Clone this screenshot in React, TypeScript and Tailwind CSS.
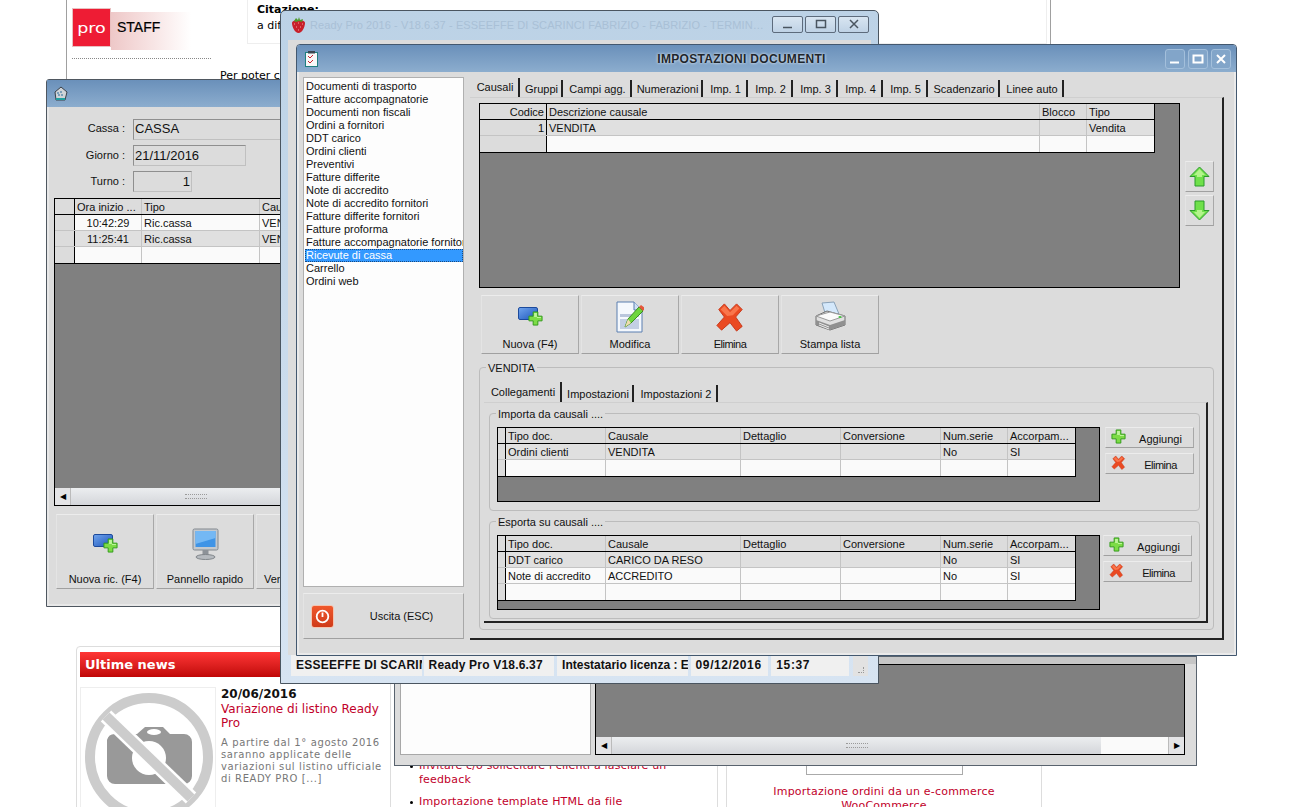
import type { ReactNode } from "react";

const LISTA = [
  "Documenti di trasporto",
  "Fatture accompagnatorie",
  "Documenti non fiscali",
  "Ordini a fornitori",
  "DDT carico",
  "Ordini clienti",
  "Preventivi",
  "Fatture differite",
  "Note di accredito",
  "Note di accredito fornitori",
  "Fatture differite fornitori",
  "Fatture proforma",
  "Fatture accompagnatorie fornitori",
  "Ricevute di cassa",
  "Carrello",
  "Ordini web",
];

const TABS = [
  { label: "Causali", w: "w-[50px]", active: true },
  { label: "Gruppi", w: "w-[43px]" },
  { label: "Campi agg.", w: "w-[69px]" },
  { label: "Numerazioni", w: "w-[71px]" },
  { label: "Imp. 1", w: "w-[45px]" },
  { label: "Imp. 2", w: "w-[45px]" },
  { label: "Imp. 3", w: "w-[45px]" },
  { label: "Imp. 4", w: "w-[45px]" },
  { label: "Imp. 5", w: "w-[45px]" },
  { label: "Scadenzario", w: "w-[72px]" },
  { label: "Linee auto", w: "w-[64px]" },
];

const SUBTABS = [
  { label: "Collegamenti", w: "w-[78px]", active: true },
  { label: "Impostazioni", w: "w-[72px]" },
  { label: "Impostazioni 2", w: "w-[84px]" },
];

const STATUS = [
  { t: "ESSEEFFE DI SCARINCI", c: "w-[131px] tracking-[0.25px]" },
  { t: "Ready Pro V18.6.37", c: "ml-[2px] w-[131px] tracking-[0.2px]" },
  { t: "Intestatario licenza : ESSEEFFE", c: "ml-[3px] w-[131px]" },
  { t: "09/12/2016", c: "ml-[3px] w-[78px] tracking-[0.6px]" },
  { t: "15:37", c: "ml-[3px] w-[78px] tracking-[0.6px]" },
];

const LINK_COLS = "grid-cols-[8px_100px_135px_100px_100px_67px_67px]";
const LINK_HEAD = ["", "Tipo doc.", "Causale", "Dettaglio", "Conversione", "Num.serie", "Accorpam..."];

/* ---------- icons ---------- */

function Plus({ size = 16 }: { size?: number }) {
  return (
    <svg width={size} height={size} viewBox="0 0 16 16">
      <path d="M5.5 1h5v4.5H15v5h-4.5V15h-5v-4.5H1v-5h4.5z" fill="#7ddc46" stroke="#2f9a18" strokeWidth="1" />
      <path d="M6.5 2.2h3v4.3h4.3v1H9.5v-1h-3z" fill="#bdf59a" />
    </svg>
  );
}

function RedX({ size = 16 }: { size?: number }) {
  return (
    <svg width={size} height={size} viewBox="0 0 32 32">
      <path
        d="M4 8 10 2l6 7 7-7 6 6-7 8 7 10-6 5-7-9-9 8-5-5 8-9z"
        fill="#ea4a22"
        stroke="#c6381a"
        strokeWidth="1"
        strokeLinejoin="round"
      />
      <path d="M6 8 10 4l6 7 7-7 3 3-7 7-6 1z" fill="#f9764c" />
    </svg>
  );
}

function NewDoc({ plusSize = 15 }: { plusSize?: number }) {
  return (
    <div className="relative h-[19px] w-[25px]">
      <div className="h-[13px] w-[20px] rounded-[2px] border border-[#1c4a9c] bg-gradient-to-br from-[#6ea2ec] to-[#1f57bb]" />
      <div className="absolute bottom-0 right-0">
        <Plus size={plusSize} />
      </div>
    </div>
  );
}

function EditDoc() {
  return (
    <svg width="28" height="32" viewBox="0 0 28 32">
      <path d="M1 1h17l8 8v22H1z" fill="#f4f8fd" stroke="#5a7fb0" />
      <path d="M18 1v8h8" fill="#cfe0f4" stroke="#5a7fb0" />
      <rect x="4" y="13" width="19" height="3" fill="#b9c6dc" />
      <rect x="4" y="18" width="19" height="10" fill="#c3cfe4" />
      <path d="M9 26 12 18 23 6l4 4-12 12z" fill="#6ed63e" stroke="#3b8e1e" />
      <path d="M23 6l2-2 4 3-2 3z" fill="#e4573a" />
      <path d="M9 26l3-8 3 4z" fill="#f0dcb0" />
    </svg>
  );
}

function Printer() {
  return (
    <svg width="32" height="32" viewBox="0 0 32 32">
      <path d="M8 2 20 1l5 12-13 2z" fill="#d4e8fb" stroke="#8aa2b8" />
      <path d="M2 15 13 10l18 5v9l-15 5-14-5z" fill="#e0e0e0" stroke="#6e6e6e" />
      <path d="M2 15l14 5 15-5-15-4z" fill="#fafafa" stroke="#9a9a9a" />
      <path d="M2 19l14 5 15-5v5l-15 5-14-5z" fill="#909090" />
      <path d="M5 22l10 4M5 24l10 4" stroke="#ececec" />
      <ellipse cx="26" cy="16" rx="1.6" ry="1" fill="#3fc43c" />
    </svg>
  );
}

function Monitor() {
  return (
    <svg width="32" height="32" viewBox="0 0 32 32">
      <rect x="4" y="1" width="25" height="21" rx="1.5" fill="#c4c9ce" stroke="#82888e" />
      <rect x="6.5" y="3" width="20" height="16" fill="#3f94e6" />
      <path d="M6.5 3h20v7L6.5 16z" fill="#74b8f4" />
      <rect x="13.5" y="22" width="6" height="5" fill="#8d9298" />
      <ellipse cx="16.5" cy="29" rx="9.5" ry="2.5" fill="#b6babf" stroke="#81868b" />
    </svg>
  );
}

function ArrowGreen({ down = false }: { down?: boolean }) {
  return (
    <svg width="21" height="21" viewBox="0 0 21 21" className={down ? "rotate-180" : ""}>
      <path d="M10.5 1 20 10.5h-5V20H6v-9.500H1z" fill="#6fe04a" stroke="#2b9a2b" strokeLinejoin="round" />
      <path d="M10.500 3 16 9h-3v2H8V9H5z" fill="#b4f48c" />
    </svg>
  );
}

function PowerIcon() {
  return (
    <div className="flex h-[23px] w-[23px] shrink-0 items-center justify-center rounded-[3px] border border-[#f4c4b0] bg-gradient-to-b from-[#f0582c] to-[#cf3a18]">
      <svg width="15" height="15" viewBox="0 0 15 15" fill="none" stroke="#fff">
        <circle cx="7.500" cy="7.500" r="5.800" strokeWidth="1.800" />
        <path d="M7.500 3.500v4.500" strokeWidth="1.800" />
      </svg>
    </div>
  );
}

function Strawberry() {
  return (
    <svg width="15" height="17" viewBox="0 0 15 17">
      <path d="M1 6c0-2 3-3 6.500-3S14 4 14 6c0 4-3 10-6.500 10S1 10 1 6z" fill="#c8202a" />
      <path d="M3 7h1M7 6h1M11 7h1M5 10h1M9 10h1M7 13h1" stroke="#f4a0a0" />
      <path d="M3 4 5 1l2 2 1-3 1 3 3-1-1 3-3-1-3 1z" fill="#4f9a2c" />
    </svg>
  );
}

function CheckDoc() {
  return (
    <svg width="13" height="16" viewBox="0 0 13 16">
      <rect x="0.500" y="1.500" width="12" height="14" fill="#f8f8f8" stroke="#1f7f80" />
      <rect x="3" y="0" width="7" height="2.500" fill="#3a4650" />
      <path d="M3 5l2 2 3-3M3 10l2 2 3-3" stroke="#c8202a" fill="none" />
    </svg>
  );
}

function Register() {
  return (
    <svg width="15" height="15" viewBox="0 0 15 15">
      <path d="M2 6 8 1l6 5-2 8H3z" fill="#cfd4d8" stroke="#3a4048" />
      <path d="M4 7h2M7 6h2M5 9h2M8 9h2" stroke="#2a6a9a" />
      <rect x="3" y="12" width="9" height="2" fill="#20a0a0" />
    </svg>
  );
}

function NoPhoto() {
  return (
    <svg width="134" height="119" viewBox="0 0 134 119">
      <path d="M26 52a8 8 0 0 1 8-6h22l8-7h18l7 7h14a8 8 0 0 1 8 8v34a8 8 0 0 1-8 8H34a8 8 0 0 1-8-8z" fill="#999" />
      <circle cx="68" cy="70" r="17" fill="#fff" />
      <ellipse cx="73" cy="44" rx="7" ry="3" fill="#fff" />
      <circle cx="68" cy="69" r="59" fill="none" stroke="#ccc" strokeWidth="10" />
      <path d="M25 28 110 110" stroke="#fff" strokeWidth="15" />
      <path d="M25 28 110 110" stroke="#ccc" strokeWidth="10" />
    </svg>
  );
}

function CaptionGlyph({ kind, stroke, width }: { kind: "min" | "max" | "close"; stroke: string; width: number }) {
  return (
    <svg width="12" height="12" viewBox="0 0 12 12" fill="none" stroke={stroke} strokeWidth={width}>
      {kind === "min" && <path d="M1 9.500h9" />}
      {kind === "max" && <rect x="1.500" y="2.500" width="9" height="7" />}
      {kind === "close" && <path d="M2 2l8 8M10 2l-8 8" />}
    </svg>
  );
}

/* ---------- small widgets ---------- */

function RaisedButton({ children, className = "" }: { children: ReactNode; className?: string }) {
  return (
    <button
      className={`shrink-0 border border-[#c6c6c6] border-r-[#a8a8a8] border-b-[#a0a0a0] border-t-[#ececec] border-l-[#e4e4e4] bg-[#dcdcdc] text-[11px] text-[#111] ${className}`}
    >
      {children}
    </button>
  );
}

function BigButton({ icon, label }: { icon: ReactNode; label: string }) {
  return (
    <RaisedButton className="flex h-[59px] w-[98px] flex-col items-center">
      <div className="flex h-[41px] items-center">{icon}</div>
      <span className={`leading-[14px] ${label === "Elimina" ? "tracking-[-0.5px]" : ""}`}>{label}</span>
    </RaisedButton>
  );
}

function SmallButton({ icon, label }: { icon: ReactNode; label: string }) {
  return (
    <RaisedButton className="flex h-[21px] w-[89px] items-center pl-[4px]">
      <div className="flex w-[16px] shrink-0 justify-center pb-[2px]">{icon}</div>
      <span className={`flex-1 pl-[2px] pt-[2px] text-center leading-[14px] ${label === "Elimina" ? "tracking-[-0.5px]" : ""}`}>
        {label}
      </span>
    </RaisedButton>
  );
}

function Tabs({ items, h = "h-[19px]" }: { items: { label: string; w: string; active?: boolean }[]; h?: string }) {
  return (
    <div className={`flex items-end ${h}`}>
      {items.map((t) => (
        <div
          key={t.label}
          className={`flex ${t.w} items-center justify-center border-r-2 border-[#222] pl-[2px] text-[11px] leading-[14px] text-[#111] ${
            t.active ? "h-full rounded-tl-[3px] pb-[1px]" : "h-[17px] pt-[1px]"
          }`}
        >
          {t.label}
        </div>
      ))}
    </div>
  );
}

function DataTable({
  cols,
  head,
  rows,
  shaded,
  rightFirst = false,
  center,
}: {
  cols: string;
  head: string[];
  rows: string[][];
  shaded: number[];
  rightFirst?: boolean;
  center?: number;
}) {
  const cell = (i: number, n: number) =>
    `truncate border-r px-[2px] pt-[1px] ${i === 0 ? "border-black bg-[#dcdcdc]" : "border-[#c4c4c4]"} ${
      i === n - 1 ? "border-r-0" : ""
    } ${i === 0 && rightFirst ? "text-right" : ""}`;
  return (
    <div className="w-fit border-r border-b border-black bg-[#fafafa] text-[11px] leading-[14px] text-[#111]">
      <div className={`grid h-[16px] border-b border-black bg-[#dcdcdc] ${cols}`}>
        {head.map((h, i) => (
          <div key={i} className={cell(i, head.length)}>
            {h}
          </div>
        ))}
      </div>
      {rows.map((r, ri) => (
        <div
          key={ri}
          className={`grid h-[16px] border-b border-[#c4c4c4] last:border-b-0 ${cols} ${
            shaded.includes(ri) ? "bg-[#e0e0e0]" : "bg-[#fafafa]"
          }`}
        >
          {r.map((c, i) => (
            <div key={i} className={`${cell(i, r.length)} ${center === i ? "text-center" : ""}`}>
              {c}
            </div>
          ))}
        </div>
      ))}
    </div>
  );
}

function GroupBox({ title, className, children }: { title: string; className: string; children: ReactNode }) {
  return (
    <div className={`relative rounded-[4px] border border-[#bcbcbc] ${className}`}>
      <span className="absolute -top-[6px] left-[6px] bg-[#dcdcdc] px-[2px] text-[11px] leading-[13px] text-[#111]">
        {title}
      </span>
      {children}
    </div>
  );
}

function ScrollBar({ thumb, right = false }: { thumb: string; right?: boolean }) {
  return (
    <div className="flex h-[17px] items-stretch bg-[#fafafa]">
      <div className="flex w-[16px] items-center justify-center border-r border-[#bbb] bg-[#e4e4e6] text-[8px] text-black">
        ◀
      </div>
      <div className={`flex items-center justify-center bg-gradient-to-b from-[#eceef0] to-[#d4d6da] ${thumb}`}>
        <div className="h-[5px] w-[22px] border-y border-dotted border-[#9a9a9a]" />
      </div>
      <div className="flex-1" />
      {right && (
        <div className="flex w-[16px] items-center justify-center border-l border-[#bbb] bg-[#e4e4e6] text-[8px] text-black">
          ▶
        </div>
      )}
    </div>
  );
}

function LinkGroup({
  title,
  rows,
  shaded,
  gap,
  className,
}: {
  title: string;
  rows: string[][];
  shaded: number[];
  gap: string;
  className: string;
}) {
  return (
    <GroupBox title={title} className={`h-[98px] w-[711px] ${className}`}>
      <div className="flex pt-[13px] pl-[7px]">
        <div className="h-[75px] w-[603px] border border-black bg-[#808080]">
          <DataTable cols={LINK_COLS} head={LINK_HEAD} rows={rows} shaded={shaded} />
        </div>
        <div className={`flex flex-col gap-[5px] ${gap}`}>
          <SmallButton icon={<Plus size={15} />} label="Aggiungi" />
          <SmallButton icon={<RedX size={15} />} label="Elimina" />
        </div>
      </div>
    </GroupBox>
  );
}

/* ---------- windows ---------- */

function ImpostazioniWindow() {
  return (
    <div className="absolute left-[296px] top-[44px] flex h-[612px] w-[941px] flex-col rounded-t-[4px] border border-[#43586f] bg-[#eaeaea]">
      <div className="flex h-[27px] shrink-0 items-center rounded-t-[3px] bg-gradient-to-b from-[#6a90ba] to-[#8cadce] pl-[8px] pr-[5px]">
        <CheckDoc />
        <div className="flex-1 text-center text-[12px] font-bold tracking-[0.3px] text-[#20262c] [text-shadow:0_0_3px_#fff]">
          IMPOSTAZIONI DOCUMENTI
        </div>
        <div className="flex gap-[3px]">
          {(["min", "max", "close"] as const).map((g) => (
            <div
              key={g}
              className="flex h-[20px] w-[20px] items-center justify-center rounded-[3px] border border-[#a3bfdb] bg-[#82a5c9]"
            >
              <CaptionGlyph kind={g} stroke="#fff" width={2} />
            </div>
          ))}
        </div>
      </div>

      <div className="mx-[2px] mb-[2px] flex flex-1 bg-[#dcdcdc] pl-[4px]">
        <div className="flex w-[161px] shrink-0 flex-col gap-[6px] pt-[5px]">
          <div className="h-[510px] overflow-hidden border border-[#b0b0b0] bg-[#fdfdfd] pt-[2px] pl-[1px] text-[11px] leading-[13px] text-[#111]">
            {LISTA.map((l) =>
              l === "Ricevute di cassa" ? (
                <div
                  key={l}
                  className="h-[13px] whitespace-nowrap bg-[#3399ff] pl-[1px] text-white outline outline-1 -outline-offset-1 outline-dotted outline-[#1a4a80]"
                >
                  {l}
                </div>
              ) : (
                <div key={l} className="h-[13px] whitespace-nowrap pl-[1px]">
                  {l}
                </div>
              ),
            )}
          </div>
          <RaisedButton className="flex h-[46px] w-[161px] items-center pl-[7px]">
            <PowerIcon />
            <span className="flex-1 pl-[6px] pt-[1px] text-center">Uscita (ESC)</span>
          </RaisedButton>
        </div>

        <div className="ml-[6px] flex w-[754px] flex-col pt-[6px]">
          <Tabs items={TABS} />
          <div className="h-[543px] border-t border-r-2 border-b-2 border-t-[#cfcfcf] border-r-[#222] border-b-[#222] pl-[9px] pt-[5px]">
            <div className="flex">
              <div className="h-[185px] w-[701px] border border-black bg-[#808080]">
                <DataTable
                  cols="grid-cols-[67px_493px_47px_67px]"
                  head={["Codice", "Descrizione causale", "Blocco", "Tipo"]}
                  rows={[
                    ["1", "VENDITA", "", "Vendita"],
                    ["", "", "", ""],
                  ]}
                  shaded={[0]}
                  rightFirst
                />
              </div>
              <div className="ml-[5px] flex flex-col gap-[3px] pt-[58px]">
                <RaisedButton className="flex h-[31px] w-[29px] items-center justify-center">
                  <ArrowGreen />
                </RaisedButton>
                <RaisedButton className="flex h-[31px] w-[29px] items-center justify-center">
                  <ArrowGreen down />
                </RaisedButton>
              </div>
            </div>

            <div className="mt-[7px] flex gap-[2px] pl-[2px]">
              <BigButton icon={<NewDoc />} label="Nuova (F4)" />
              <BigButton icon={<EditDoc />} label="Modifica" />
              <BigButton icon={<RedX size={30} />} label="Elimina" />
              <BigButton icon={<Printer />} label="Stampa lista" />
            </div>

            <GroupBox title="VENDITA" className="mt-[13px] h-[263px] w-[735px] pl-[4px] pt-[14px]">
              <div className="w-[724px]">
                <Tabs items={SUBTABS} h="h-[20px]" />
                <div className="h-[221px] border-t border-r-2 border-b-2 border-t-[#cfcfcf] border-r-[#222] border-b-[#222] pl-[5px] pt-[10px]">
                  <LinkGroup
                    title="Importa da causali ...."
                    rows={[
                      ["", "Ordini clienti", "VENDITA", "", "", "No", "SI"],
                      ["", "", "", "", "", "", ""],
                    ]}
                    shaded={[0]}
                    gap="ml-[5px]"
                    className=""
                  />
                  <LinkGroup
                    title="Esporta su causali ...."
                    rows={[
                      ["", "DDT carico", "CARICO DA RESO", "", "", "No", "SI"],
                      ["", "Note di accredito", "ACCREDITO", "", "", "No", "SI"],
                      ["", "", "", "", "", "", ""],
                    ]}
                    shaded={[0]}
                    gap="ml-[3px]"
                    className="mt-[10px]"
                  />
                </div>
              </div>
            </GroupBox>
          </div>
        </div>
      </div>
    </div>
  );
}

function ParentWindow() {
  return (
    <div className="absolute left-[280px] top-[10px] flex h-[674px] w-[599px] flex-col rounded-t-[5px] border border-[#4a5560] bg-gradient-to-b from-[#bcd2e6] to-[#d7e4f2]">
      <div className="flex h-[29px] shrink-0 items-center pl-[10px] pr-[9px]">
        <Strawberry />
        <div className="flex-1 truncate pl-[4px] text-[11px] tracking-[0.1px] text-[#a9c0d6]">
          Ready Pro 2016 - V18.6.37 - ESSEEFFE DI SCARINCI FABRIZIO - FABRIZIO - TERMINALE 1
        </div>
        <div className="flex gap-[2px] pb-[3px] pl-[4px]">
          {(["min", "max", "close"] as const).map((g) => (
            <div
              key={g}
              className="flex h-[17px] w-[31px] items-center justify-center rounded-[2px] border border-[#5d6b7c] bg-gradient-to-b from-[#d8e5f1] to-[#bfd2e5]"
            >
              <CaptionGlyph kind={g} stroke="#4a5560" width={1.500} />
            </div>
          ))}
        </div>
      </div>
      <div className="mx-[7px] h-[615px] bg-[#dcdcdc]" />
      <div className="mx-[10px] flex h-[21px] text-[12px] font-bold text-[#111]">
        {STATUS.map((c) => (
          <div key={c.t} className={`overflow-hidden whitespace-nowrap bg-[#f0f0f0] px-[5px] leading-[20px] ${c.c}`}>
            {c.t}
          </div>
        ))}
        <div className="ml-[4px] flex w-[15px] items-end justify-center bg-[#e2e2e2] pb-[3px]">
          <div className="h-[6px] w-[6px] border-r border-b border-dotted border-[#999]" />
        </div>
      </div>
    </div>
  );
}

function CassaWindow() {
  return (
    <div className="absolute left-[46px] top-[79px] flex h-[528px] w-[330px] flex-col rounded-t-[3px] border border-[#4f5760] bg-[#e8e8e8]">
      <div className="flex h-[27px] shrink-0 items-center bg-gradient-to-b from-[#6a90ba] to-[#8cadce] pl-[6px]">
        <Register />
      </div>
      <div className="mx-[2px] mb-[2px] flex-1 bg-[#dcdcdc] pl-[5px] pt-[12px] text-[11px] text-[#111]">
        <div className="grid grid-cols-[71px_1fr] items-center gap-x-[8px] gap-y-[5px] text-[11px]">
          <span className="pb-[2px] text-right">Cassa :</span>
          <div className="h-[21px] border border-[#c0c0c0] border-t-[#8f8f8f] border-l-[#8f8f8f] pl-[1px] text-[13px] leading-[17px]">
            CASSA
          </div>
          <span className="text-right">Giorno :</span>
          <div className="h-[21px] w-[113px] border border-[#c0c0c0] border-t-[#8f8f8f] border-l-[#8f8f8f] pl-[1px] text-[13px] leading-[19px]">
            21/11/2016
          </div>
          <span className="text-right">Turno :</span>
          <div className="h-[21px] w-[59px] border border-[#c0c0c0] border-t-[#8f8f8f] border-l-[#8f8f8f] pr-[1px] text-right text-[13px] leading-[19px]">
            1
          </div>
        </div>
        <div className="mt-[6px] flex h-[308px] flex-col border border-black bg-[#808080]">
          <div className="flex-1">
            <DataTable
              cols="grid-cols-[20px_67px_118px_100px]"
              head={["", "Ora inizio ...", "Tipo", "Causale"]}
              rows={[
                ["", "10:42:29", "Ric.cassa", "VENDITA"],
                ["", "11:25:41", "Ric.cassa", "VENDITA"],
                ["", "", "", ""],
              ]}
              shaded={[1]}
              center={1}
            />
          </div>
          <ScrollBar thumb="w-[250px]" />
        </div>
        <div className="mt-[8px] flex gap-[2px] pl-[2px]">
          <RaisedButton className="flex h-[75px] w-[98px] flex-col items-center">
            <div className="flex h-[57px] items-center">
              <NewDoc />
            </div>
            <span className="leading-[14px]">Nuova ric. (F4)</span>
          </RaisedButton>
          <RaisedButton className="flex h-[75px] w-[98px] flex-col items-center">
            <div className="flex h-[57px] items-center">
              <Monitor />
            </div>
            <span className="leading-[14px]">Pannello rapido</span>
          </RaisedButton>
          <RaisedButton className="flex h-[75px] w-[98px] flex-col items-start pl-[7px]">
            <div className="h-[57px]" />
            <span className="leading-[14px]">Vendite</span>
          </RaisedButton>
        </div>
      </div>
    </div>
  );
}

function BackWindow() {
  return (
    <div className="absolute left-[394px] top-[656px] flex h-[110px] w-[803px] flex-col border border-[#59636e] bg-[#dcdcdc]">
      <div className="h-[7px] bg-[#c6c6c6]" />
      <div className="flex h-[91px] gap-[4px] pl-[5px] pr-[11px]">
        <div className="w-[191px] border border-[#a8a8a8] bg-[#fdfdfd]" />
        <div className="flex flex-1 flex-col justify-end border border-black bg-[#808080]">
          <ScrollBar thumb="w-[489px]" right />
        </div>
      </div>
    </div>
  );
}

function NewsBox() {
  return (
    <div className="absolute left-[76px] top-[646px] h-[170px] w-[315px] rounded-t-[4px] border border-[#dddddd] bg-white px-[3px] pt-[5px] font-['DejaVu_Sans',sans-serif]">
      <div className="flex h-[25px] items-center bg-gradient-to-b from-[#ff3535] to-[#c00606] pl-[5px] text-[13px] font-bold text-white">
        Ultime news
      </div>
      <div className="mt-[10px] flex gap-[5px]">
        <div className="h-[130px] w-[136px] shrink-0 border border-[#eeeeee]">
          <NoPhoto />
        </div>
        <div className="w-[165px] pt-[1px]">
          <div className="text-[12px] font-bold leading-[13px] text-[#111]">20/06/2016</div>
          <div className="mt-[1px] text-[12px] leading-[14px] text-[#c1002a]">Variazione di listino Ready Pro</div>
          <div className="mt-[7px] text-[10px] leading-[12px] tracking-[0.6px] text-[#777]">
            A partire dal 1° agosto 2016 saranno applicate delle variazioni sul listino ufficiale di READY PRO [...]
          </div>
        </div>
      </div>
    </div>
  );
}

function WebPage() {
  return (
    <>
      <div className="absolute left-[66px] top-0 h-[80px] w-[985px] border-x border-[#a0a0a0]">
        <div className="absolute left-[5px] top-[8px] flex h-[42px]">
          <div className="flex h-[39px] w-[39px] items-center justify-center border border-[#e8c0c0] bg-[#ee1c34] font-['DejaVu_Sans',sans-serif] text-[14px] leading-none text-white">
            <span className="scale-x-125">pro</span>
          </div>
          <div className="mt-[4px] flex h-[38px] w-[80px] items-center bg-gradient-to-r from-[#eec8c8] to-white pb-[8px] pl-[6px] text-[14px] leading-none text-black">
            <span className="[-webkit-text-stroke:0.2px_black]">STAFF</span>
          </div>
        </div>
        <div className="absolute left-[5px] top-[58px] w-[139px] border-t border-dotted border-[#888]" />
        <div className="absolute left-[180px] top-0 h-[44px] w-[800px] border-b border-l border-r border-[#eeeeee] pl-[9px] pt-[2px] font-['DejaVu_Sans',sans-serif] text-[11px] leading-[16px] text-black">
          <div className="font-bold">Citazione:</div>
          <div>a dif</div>
        </div>
        <div className="absolute left-[153px] top-[69px] font-['DejaVu_Sans',sans-serif] text-[11px] leading-[14px] text-black">
          Per poter c
        </div>
      </div>

      <NewsBox />

      <div className="absolute left-[391px] top-[700px] h-[107px] w-[327px] border-r border-[#dddddd] pl-[19px] pt-[59px] font-['DejaVu_Sans',sans-serif] text-[11px] leading-[14px] tracking-[0.18px] text-[#c1002a]">
        <div className="flex gap-[6px]">
          <div className="mt-[6px] h-[3px] w-[3px] shrink-0 rounded-full bg-black" />
          <span className="w-[262px]">Invitare c/o sollecitare i clienti a lasciare un feedback</span>
        </div>
        <div className="mt-[8px] flex gap-[6px]">
          <div className="mt-[6px] h-[3px] w-[3px] shrink-0 rounded-full bg-black" />
          <span>Importazione template HTML da file</span>
        </div>
      </div>

      <div className="absolute left-[726px] top-[700px] flex h-[107px] w-[316px] flex-col items-center overflow-hidden border-x border-[#dddddd] font-['DejaVu_Sans',sans-serif] text-[11px] leading-[14px] tracking-[0.2px] text-[#c1002a]">
        <div className="h-[75px] w-[157px] shrink-0 border-x border-b border-[#aaaaaa]" />
        <div className="mt-[10px] w-[240px] shrink-0 text-center">Importazione ordini da un e-commerce WooCommerce</div>
      </div>
    </>
  );
}

export default function App() {
  return (
    <div className="relative h-[807px] w-[1296px] overflow-hidden bg-white font-['Liberation_Sans',sans-serif]">
      <WebPage />
      <CassaWindow />
      <BackWindow />
      <ParentWindow />
      <ImpostazioniWindow />
    </div>
  );
}
